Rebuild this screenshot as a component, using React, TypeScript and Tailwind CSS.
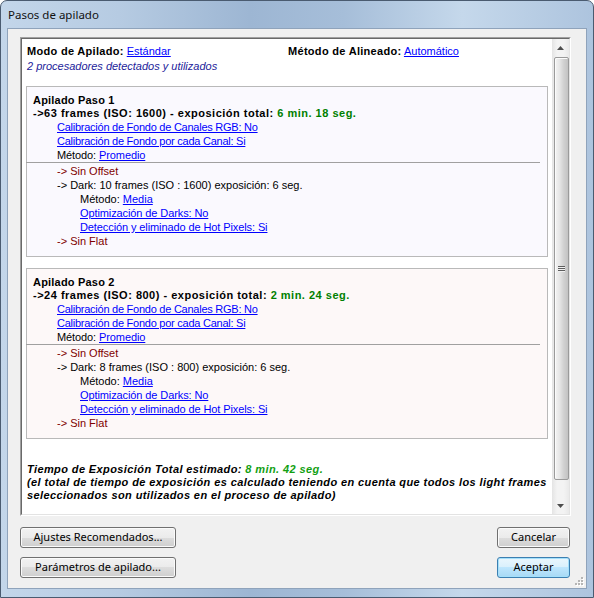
import React from 'react';

const A = ({ children }: { children: React.ReactNode }) => (
  <span className="text-[#0000ff] underline">{children}</span>
);

const steps = [
  { n: 1, frames: 63, iso: 1600, total: '6 min. 18 seg.', dark: 10, bg: 'bg-[#faf9fe]' },
  { n: 2, frames: 24, iso: 800, total: '2 min. 24 seg.', dark: 8, bg: 'bg-[#fdf8f8]' },
];

const StepBox = ({ step }: { step: (typeof steps)[number] }) => (
  <div className={`ml-[4px] w-[522px] h-[171px] border border-[#b9b9b9] pl-[6px] pt-[7px] ${step.bg}`}>
    <div className="h-[13px] leading-[13px] font-bold tracking-[0.2px]">Apilado Paso {step.n}</div>
    <div className="h-[13px] leading-[13px] font-bold tracking-[0.5px] whitespace-nowrap">
      -&gt;{step.frames} frames (ISO: {step.iso}) - exposición total:{' '}
      <span className="text-[#008000]">{step.total}</span>
    </div>
    <div className="h-[14px] leading-[14px] pl-[24px] tracking-[-0.25px]">
      <A>Calibración de Fondo de Canales RGB: No</A>
    </div>
    <div className="h-[14px] leading-[14px] pl-[24px] tracking-[-0.25px]">
      <A>Calibración de Fondo por cada Canal: Si</A>
    </div>
    <div className="h-[14px] leading-[14px] pl-[24px] tracking-[-0.1px]">
      Método: <A>Promedio</A>
    </div>
    <div className="h-px -ml-[7px] mr-[7px] mb-px bg-[#a0a0a0]" />
    <div className="h-[14px] leading-[14px] pl-[24px] text-[#800000]">-&gt; Sin Offset</div>
    <div className="h-[14px] leading-[14px] pl-[24px]">
      -&gt; Dark: {step.dark} frames (ISO : {step.iso}) exposición: 6 seg.
    </div>
    <div className="h-[14px] leading-[14px] pl-[47px]">
      Método: <A>Media</A>
    </div>
    <div className="h-[14px] leading-[14px] pl-[47px] tracking-[-0.1px]">
      <A>Optimización de Darks: No</A>
    </div>
    <div className="h-[14px] leading-[14px] pl-[47px] tracking-[-0.1px]">
      <A>Detección y eliminado de Hot Pixels: Si</A>
    </div>
    <div className="h-[14px] leading-[14px] pl-[24px] text-[#800000]">-&gt; Sin Flat</div>
  </div>
);

const Scrollbar = () => (
  <div className="w-[17px] h-full flex flex-col bg-[linear-gradient(90deg,#e4e4e4,#f3f3f3_30%,#f3f3f3_70%,#e9e9e9)]">
    <div className="h-[17px] flex items-center justify-center">
      <svg width="7" height="4" viewBox="0 0 7 4">
        <path d="M3.5 0 L7 4 L0 4 Z" fill="#4d4d4d" />
      </svg>
    </div>
    <div className="mt-px ml-[2px] w-[15px] h-[423px] rounded-[2px] border border-[#9a9a9a] bg-[linear-gradient(90deg,#f4f4f4,#e6e6e6_35%,#d2d2d2_65%,#c2c2c2)] shadow-[inset_1px_1px_0_#fbfbfb] flex items-center justify-center">
      <div className="flex flex-col gap-px">
        <div className="w-[7px] h-px bg-[#5e5e5e] shadow-[0_1px_0_#f0f0f0]" />
        <div className="w-[7px] h-px bg-[#5e5e5e] shadow-[0_1px_0_#f0f0f0]" />
        <div className="w-[7px] h-px bg-[#5e5e5e] shadow-[0_1px_0_#f0f0f0]" />
      </div>
    </div>
    <div className="flex-1" />
    <div className="h-[17px] flex items-center justify-center">
      <svg width="7" height="4" viewBox="0 0 7 4">
        <path d="M0 0 L7 0 L3.5 4 Z" fill="#4d4d4d" />
      </svg>
    </div>
  </div>
);

const btn =
  "h-[21px] rounded-[3px] border text-[11px] text-black font-['Noto_Sans',sans-serif] flex items-center justify-center";
const grey =
  'border-[#707070] bg-[linear-gradient(to_bottom,#f2f2f2_0%,#ebebeb_50%,#dddddd_50%,#cfcfcf_100%)] shadow-[inset_0_0_0_1px_#fbfbfb]';

export default function App() {
  return (
    <div className="w-[594px] h-[598px] flex flex-col rounded-t-[7px] border border-[#4a5b70] bg-[linear-gradient(90deg,#c3d6ea_0%,#b6cbe2_20%,#9db6d3_42%,#a6bed9_58%,#c5d8eb_78%,#adc4de_100%)]">
      <div className="h-[27px] shrink-0 pl-[7px] pt-px flex items-center text-[11.5px] text-[#111] font-['Noto_Sans',sans-serif]">
        Pasos de apilado
      </div>
      <div className="mx-[6px] h-[561px] border border-[#8fa3bb] bg-[#f0f0f0] relative font-['Liberation_Sans',Arial,sans-serif] text-[11px] text-black">
        <div className="ml-[12px] mt-[8px] w-[551px] h-[479px] border border-t-[#a0a0a0] border-l-[#a0a0a0] border-r-white border-b-white">
          <div className="h-full border border-t-[#696969] border-l-[#696969] border-r-[#e3e3e3] border-b-[#e3e3e3] bg-white flex">
            <div className="flex-1 overflow-hidden">
              <div className="pt-[5px] pl-[5px] flex h-[14px] leading-[14px] box-content">
                <div className="w-[261px]">
                  <span className="font-bold tracking-[0.3px]">Modo de Apilado:</span> <A>Estándar</A>
                </div>
                <div>
                  <span className="font-bold tracking-[0.3px]">Método de Alineado:</span> <A>Automático</A>
                </div>
              </div>
              <div className="mt-px pl-[5px] h-[14px] leading-[14px] italic text-[#22229a]">
                2 procesadores detectados y utilizados
              </div>
              <div className="mt-[13px]">
                <StepBox step={steps[0]} />
              </div>
              <div className="mt-[11px]">
                <StepBox step={steps[1]} />
              </div>
              <div className="mt-[24px] pl-[5px] font-bold italic leading-[13px] tracking-[0.4px] whitespace-nowrap">
                <div>
                  Tiempo de Exposición Total estimado: <span className="text-[#12a012]">8 min. 42 seg.</span>
                </div>
                <div>
                  (el total de tiempo de exposición es calculado teniendo en cuenta que todos los light frames
                </div>
                <div>seleccionados son utilizados en el proceso de apilado)</div>
              </div>
            </div>
            <Scrollbar />
          </div>
        </div>
        <div className="mt-[11px] pl-[12px] pr-[16px] flex justify-between">
          <button className={`${btn} ${grey} w-[156px]`}>Ajustes Recomendados...</button>
          <button className={`${btn} ${grey} w-[73px]`}>Cancelar</button>
        </div>
        <div className="mt-[9px] pl-[12px] pr-[16px] flex justify-between">
          <button className={`${btn} ${grey} w-[156px]`}>Parámetros de apilado...</button>
          <button
            className={`${btn} w-[73px] border-[#3c7fb1] bg-[linear-gradient(to_bottom,#eaf6fd_0%,#d9f0fc_50%,#bee6fd_50%,#a7d9f5_100%)] shadow-[inset_0_0_0_1px_#a4e0fb]`}
          >
            Aceptar
          </button>
        </div>
        <svg className="absolute right-[2px] bottom-[2px]" width="11" height="11" viewBox="0 0 11 11">
          {[
            [8, 2],
            [5, 5],
            [8, 5],
            [2, 8],
            [5, 8],
            [8, 8],
          ].map(([x, y]) => (
            <g key={`${x}-${y}`}>
              <rect x={x + 1} y={y + 1} width="2" height="2" fill="#ffffff" />
              <rect x={x} y={y} width="2" height="2" fill="#b5b5b5" />
            </g>
          ))}
        </svg>
      </div>
    </div>
  );
}
